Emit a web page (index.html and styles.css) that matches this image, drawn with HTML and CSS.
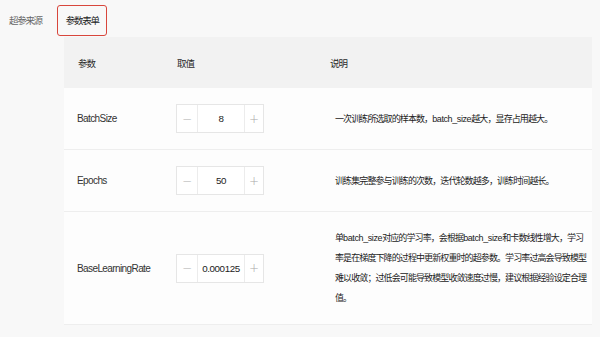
FILE: index.html
```html
<!DOCTYPE html>
<html lang="zh">
<head>
<meta charset="utf-8">
<link rel="stylesheet" href="styles.css">
</head>
<body>
<div class="tabs">
  <div class="tab">超参来源</div>
  <div class="tab tab-active">参数表单</div>
</div>
<div class="table">
  <div class="row head">
    <div class="cell c1">参数</div>
    <div class="cell c2">取值</div>
    <div class="cell c3">说明</div>
  </div>
  <div class="row r-short">
    <div class="cell c1 name">BatchSize</div>
    <div class="cell c2">
      <div class="stepper"><span class="btn">−</span><span class="val">8</span><span class="btn">+</span></div>
    </div>
    <div class="cell c3 desc">一次训练所选取的样本数，<span class="lat">batch_size</span>越大，显存占用越大。</div>
  </div>
  <div class="row r-short">
    <div class="cell c1 name">Epochs</div>
    <div class="cell c2">
      <div class="stepper"><span class="btn">−</span><span class="val">50</span><span class="btn">+</span></div>
    </div>
    <div class="cell c3 desc">训练集完整参与训练的次数，迭代轮数越多，训练时间越长。</div>
  </div>
  <div class="row r-tall">
    <div class="cell c1 name">BaseLearningRate</div>
    <div class="cell c2">
      <div class="stepper"><span class="btn">−</span><span class="val">0.000125</span><span class="btn">+</span></div>
    </div>
    <div class="cell c3 desc multi">单<span class="lat">batch_size</span>对应的学习率，会根据<span class="lat">batch_size</span>和卡数线性增大，学习<br>率是在梯度下降的过程中更新权重时的超参数。学习率过高会导致模型<br>难以收敛；过低会可能导致模型收敛速度过慢，建议根据经验设定合理<br>值。</div>
  </div>
</div>
</body>
</html>
```

FILE: styles.css
```css
* { box-sizing: border-box; }
html, body { margin: 0; padding: 0; }
body {
  width: 600px;
  height: 337px;
  overflow: hidden;
  background: #f8f8f8;
  font-family: "Liberation Sans", "Noto Sans CJK SC", sans-serif;
  color: #333;
}
.tabs {
  display: flex;
  align-items: center;
  gap: 15px;
  padding: 4px 0 0 9px;
  height: 36px;
}
.tab {
  font-family: "Noto Sans CJK SC", sans-serif;
  font-size: 9.5px;
  letter-spacing: -1.3px;
  color: #666;
  line-height: 29px;
}
.tab-active {
  color: #222;
  border: 1.5px solid #d8463c;
  border-radius: 3px;
  padding: 0 7px 0 8px;
  height: 31px;
  line-height: 28px;
}
.table {
  margin: 1px 0 0 64px;
  width: 528px;
  background: #fdfdfd;
}
.row {
  display: grid;
  grid-template-columns: 112px 154px 1fr;
  align-items: center;
  border-bottom: 1px solid #eeeeee;
}
.head {
  height: 51px;
  background: #f2f2f2;
  border-bottom: none;
  font-family: "Noto Sans CJK SC", sans-serif;
  font-size: 9.5px;
  letter-spacing: -1px;
  color: #2a2a2a;
}
.r-short { height: 62px; }
.r-tall { height: 113px; }
.c1 { padding-left: 14px; }
.c2 { padding-left: 0; }
.head .c2 { padding-left: 1px; }
.c3 { padding-left: 0; }
.name {
  font-size: 10px;
  letter-spacing: -0.6px;
  color: #333;
  padding-left: 13px;
}
.desc {
  font-family: "Liberation Sans", "Noto Sans CJK SC", sans-serif;
  font-size: 9px;
  letter-spacing: -0.9px;
  color: #222;
  padding-left: 5px;
  white-space: nowrap;
}
.lat { letter-spacing: -0.4px; }
.multi { line-height: 20px; }
.stepper {
  display: flex;
  width: 88px;
  height: 29px;
  border: 1px solid #e6e6e6;
  background: #fff;
}
.btn {
  width: 21px;
  display: flex;
  align-items: center;
  justify-content: center;
  color: #aaa;
  font-size: 12px;
  font-weight: 300;
  font-family: "DejaVu Sans", sans-serif;
}
.btn:first-child { border-right: 1px solid #ececec; }
.btn:last-child { border-left: 1px solid #ececec; width: 19px; }
.val {
  flex: 1;
  display: flex;
  align-items: center;
  justify-content: center;
  font-size: 9.8px;
  letter-spacing: -0.4px;
  color: #222;
}
```
